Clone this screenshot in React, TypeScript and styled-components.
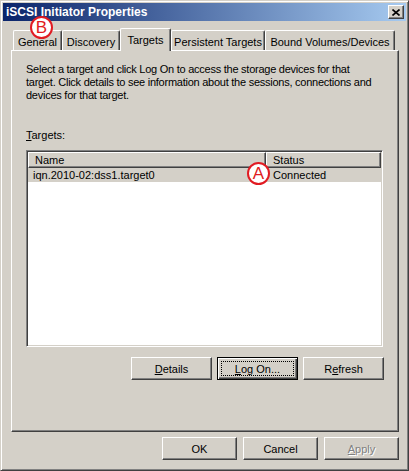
import styled, { createGlobalStyle } from 'styled-components';

const GlobalStyle = createGlobalStyle`
  html, body {
    margin: 0;
    padding: 0;
    background: #d4d0c8;
  }
  body {
    font-family: "Liberation Sans", Arial, sans-serif;
    font-size: 11px;
    color: #000;
  }
`;

const tabs = [
  { label: 'General', width: 49 },
  { label: 'Discovery', width: 58 },
  { label: 'Targets', width: 51, active: true },
  { label: 'Persistent Targets', width: 94 },
  { label: 'Bound Volumes/Devices', width: 130 },
];

export default function App() {
  return (
    <>
      <GlobalStyle />
      <Window>
        <TitleBar>
          <Title>iSCSI Initiator Properties</Title>
          <CloseButton aria-label="Close">
            <svg width="8" height="7" viewBox="0 0 8 7">
              <path d="M0.5 0.5 L7.5 6.5 M7.5 0.5 L0.5 6.5" stroke="#000" strokeWidth="1.6" />
            </svg>
          </CloseButton>
        </TitleBar>

        <Body>
          <TabStrip>
            {tabs.map((tab) => (
              <Tab key={tab.label} $width={tab.width} $active={!!tab.active}>
                {tab.label}
              </Tab>
            ))}
          </TabStrip>

          <Panel>
            <Description>
              Select a target and click Log On to access the storage devices for that
              <br />
              target. Click details to see information about the sessions, connections and
              <br />
              devices for that target.
            </Description>

            <Label>
              <u>T</u>argets:
            </Label>

            <List>
              <Header>
                <HeaderCell $width={238}>Name</HeaderCell>
                <HeaderCell $width={115}>Status</HeaderCell>
              </Header>
              <Row>
                <RowCell $width={238} $pad={5}>
                  iqn.2010-02:dss1.target0
                </RowCell>
                <RowCell $width={115} $pad={7}>
                  Connected
                </RowCell>
              </Row>
            </List>

            <ButtonRow>
              <Button $width={81}>
                <u>D</u>etails
              </Button>
              <Button $width={81} $default>
                <u>L</u>og On...
              </Button>
              <Button $width={81}>
                R<u>e</u>fresh
              </Button>
            </ButtonRow>
          </Panel>

          <Footer>
            <Button $width={75}>OK</Button>
            <Button $width={75}>Cancel</Button>
            <Button $width={75} $disabled>
              <u>A</u>pply
            </Button>
          </Footer>
        </Body>

        <Marker style={{ left: 29, top: 15 }}>B</Marker>
        <Marker style={{ left: 246, top: 161 }}>A</Marker>
      </Window>
    </>
  );
}

// window frame
const Window = styled.div`
  position: relative;
  box-sizing: border-box;
  width: 409px;
  height: 471px;
  display: flex;
  flex-direction: column;
  padding: 2px;
  background: #d4d0c8;
  border: 1px solid;
  border-color: #d4d0c8 #404040 #404040 #d4d0c8;
  box-shadow: inset 1px 1px #fff, inset -1px -1px #808080;
`;

const TitleBar = styled.div`
  height: 18px;
  display: flex;
  align-items: center;
  justify-content: space-between;
  padding-left: 3px;
  background: linear-gradient(to right, #0a246a, #a6caf0);
`;

const Title = styled.span`
  color: #fff;
  font-weight: bold;
  font-size: 12px;
  white-space: nowrap;
`;

const CloseButton = styled.div`
  box-sizing: border-box;
  width: 16px;
  height: 14px;
  margin-right: 2px;
  display: flex;
  align-items: center;
  justify-content: center;
  background: #d4d0c8;
  border: 1px solid;
  border-color: #fff #404040 #404040 #fff;
  box-shadow: inset -1px -1px #808080;
`;

const Body = styled.div`
  flex: 1;
  display: flex;
  flex-direction: column;
  padding: 7px 7px 8px 8px;
`;

// tabs
const TabStrip = styled.div`
  display: flex;
  align-items: flex-end;
  height: 22px;
  padding-left: 2px;
`;

const Tab = styled.div<{ $width: number; $active: boolean }>`
  position: relative;
  z-index: ${({ $active }) => ($active ? 1 : 0)};
  box-sizing: border-box;
  width: ${({ $width }) => $width}px;
  height: ${({ $active }) => ($active ? 23 : 20)}px;
  margin-bottom: ${({ $active }) => ($active ? -1 : 0)}px;
  padding-top: 5px;
  line-height: 13px;
  text-align: center;
  white-space: nowrap;
  background: #d4d0c8;
  border-top: 1px solid #fff;
  border-left: 1px solid #fff;
  border-right: 1px solid #404040;
  border-radius: 2px 2px 0 0;
  box-shadow: inset -1px 0 #808080;
`;

const Panel = styled.div`
  box-sizing: border-box;
  height: 382px;
  display: flex;
  flex-direction: column;
  padding: 12px 14px 0 14px;
  border: 1px solid;
  border-color: #fff #404040 #404040 #fff;
  box-shadow: inset -1px -1px #808080;
`;

const Description = styled.p`
  margin: 0;
  line-height: 13px;
  letter-spacing: -0.25px;
  white-space: nowrap;
`;

const Label = styled.div`
  margin-top: 27px;
  line-height: 13px;
`;

// list view
const List = styled.div`
  box-sizing: border-box;
  width: 357px;
  height: 197px;
  margin-top: 8px;
  padding: 1px;
  background: #fff;
  border: 1px solid;
  border-color: #808080 #fff #fff #808080;
  box-shadow: inset 1px 1px #404040, inset -1px -1px #d4d0c8;
`;

const Header = styled.div`
  display: flex;
  height: 16px;
`;

const HeaderCell = styled.div<{ $width: number }>`
  box-sizing: border-box;
  width: ${({ $width }) => $width}px;
  padding: 1px 0 0 6px;
  line-height: 13px;
  background: #d4d0c8;
  border: 1px solid;
  border-color: #fff #404040 #404040 #fff;
  box-shadow: inset -1px -1px #808080;
`;

const Row = styled.div`
  display: flex;
  height: 14px;
  background: #d4d0c8;
`;

const RowCell = styled.div<{ $width: number; $pad: number }>`
  box-sizing: border-box;
  width: ${({ $width }) => $width}px;
  padding-left: ${({ $pad }) => $pad}px;
  line-height: 14px;
  white-space: nowrap;
`;

// buttons
const ButtonRow = styled.div`
  display: flex;
  justify-content: flex-end;
  gap: 5px;
  margin-top: 10px;
`;

const Footer = styled.div`
  display: flex;
  justify-content: flex-end;
  gap: 6px;
  margin-top: 5px;
`;

const Button = styled.div<{ $width: number; $default?: boolean; $disabled?: boolean }>`
  position: relative;
  box-sizing: border-box;
  width: ${({ $width }) => $width}px;
  height: 23px;
  display: flex;
  align-items: center;
  justify-content: center;
  background: #d4d0c8;
  color: ${({ $disabled }) => ($disabled ? '#808080' : '#000')};
  text-shadow: ${({ $disabled }) => ($disabled ? '1px 1px #fff' : 'none')};
  border: 1px solid;
  border-color: ${({ $default }) => ($default ? '#000' : '#fff #404040 #404040 #fff')};
  box-shadow: ${({ $default }) =>
    $default
      ? 'inset 1px 1px #fff, inset -1px -1px #404040, inset -2px -2px #808080'
      : 'inset -1px -1px #808080'};

  &::after {
    content: '';
    display: ${({ $default }) => ($default ? 'block' : 'none')};
    position: absolute;
    inset: 3px;
    border: 1px dotted #000;
  }
`;

// red callouts drawn over the screenshot
const Marker = styled.div`
  position: absolute;
  box-sizing: border-box;
  width: 23px;
  height: 23px;
  border: 2px solid #e11b22;
  border-radius: 50%;
  background: #fff;
  color: #e11b22;
  font-family: "Liberation Sans", Arial, sans-serif;
  font-size: 17px;
  line-height: 19px;
  text-align: center;
`;
